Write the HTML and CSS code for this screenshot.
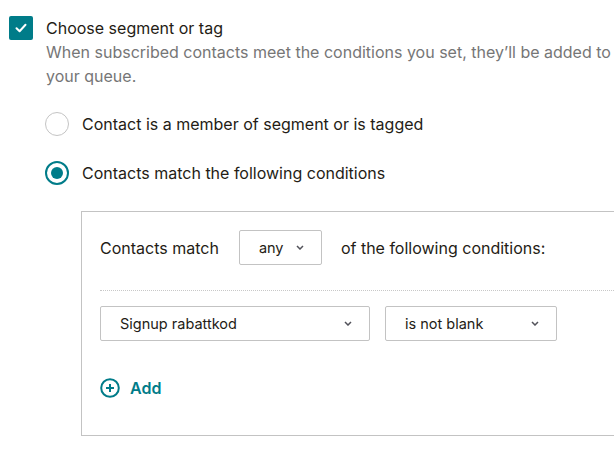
FILE: index.html
```html
<!DOCTYPE html>
<html>
<head>
<meta charset="utf-8">
<link rel="stylesheet" href="styles.css">
</head>
<body>
<div class="page">
  <div class="check-row">
    <span class="checkbox">
      <svg width="14" height="14" viewBox="0 0 14 14"><path d="M2.5 7.2 L5.6 10.2 L11.5 3.8" fill="none" stroke="#fff" stroke-width="2" stroke-linecap="round" stroke-linejoin="round"/></svg>
    </span>
    <div class="check-body">
      <div class="check-title">Choose segment or tag</div>
      <p class="desc">When subscribed contacts meet the conditions you set, they’ll be added to your queue.</p>
    </div>
  </div>
  <div class="radios">
    <div class="radio-row"><span class="radio"></span><span class="radio-label">Contact is a member of segment or is tagged</span></div>
    <div class="radio-row"><span class="radio on"><span class="dot"></span></span><span class="radio-label">Contacts match the following conditions</span></div>
  </div>
  <div class="box">
    <div class="match-row">
      <span class="match-text">Contacts match</span>
      <span class="select sel-any"><span>any</span>
        <svg class="chev" width="8" height="5" viewBox="0 0 8 5"><path d="M1 1 L4 4 L7 1" fill="none" stroke="#52525a" stroke-width="1.5"/></svg>
      </span>
      <span class="match-text">of the following conditions:</span>
    </div>
    <div class="divider"></div>
    <div class="cond-row">
      <span class="select sel-field"><span>Signup rabattkod</span>
        <svg class="chev" width="8" height="5" viewBox="0 0 8 5"><path d="M1 1 L4 4 L7 1" fill="none" stroke="#52525a" stroke-width="1.5"/></svg>
      </span>
      <span class="select sel-op"><span>is not blank</span>
        <svg class="chev" width="8" height="5" viewBox="0 0 8 5"><path d="M1 1 L4 4 L7 1" fill="none" stroke="#52525a" stroke-width="1.5"/></svg>
      </span>
    </div>
    <div class="add-row">
      <svg width="20" height="20" viewBox="0 0 20 20"><circle cx="10" cy="10" r="8.8" fill="none" stroke="#007c89" stroke-width="2"/><path d="M10 6 V14 M6 10 H14" stroke="#007c89" stroke-width="2"/></svg>
      <span class="add-text">Add</span>
    </div>
  </div>
</div>
</body>
</html>
```

FILE: styles.css
```css
html, body {
  margin: 0;
  padding: 0;
  background: #fff;
  overflow: hidden;
}
body {
  font-family: "Inter", "Liberation Sans", sans-serif;
  color: #241c15;
  width: 614px;
  height: 451px;
}
.page {
  padding: 16px 0 0 9px;
}
.check-row {
  display: flex;
  gap: 13px;
  align-items: flex-start;
}
.checkbox {
  flex: 0 0 24px;
  width: 24px;
  height: 24px;
  border-radius: 2px;
  background: #007c89;
  display: flex;
  align-items: center;
  justify-content: center;
}
.check-title {
  font-size: 16px;
  line-height: 24px;
}
.desc {
  margin: 0;
  font-size: 16px;
  line-height: 24px;
  color: #767676;
  width: 566px;
}
.radios {
  margin: 24px 0 0 36px;
  display: flex;
  flex-direction: column;
  gap: 25px;
}
.radio-row {
  display: flex;
  align-items: center;
  gap: 13px;
  font-size: 16px;
  height: 24px;
}
.radio {
  width: 24px;
  height: 24px;
  box-sizing: border-box;
  border: 1px solid #c4c4c4;
  border-radius: 50%;
  display: flex;
  align-items: center;
  justify-content: center;
}
.radio.on {
  border: 2px solid #007c89;
}
.dot {
  width: 12px;
  height: 12px;
  border-radius: 50%;
  background: #007c89;
}
.box {
  margin: 26px 0 0 72px;
  width: 533px;
  height: 225px;
  box-sizing: border-box;
  border: 1px solid #c3c3c3;
  border-right: none;
  padding: 18px 0 0 18px;
}
.match-row {
  display: flex;
  align-items: center;
  gap: 20px;
  font-size: 16px;
  height: 35px;
}
.match-row .sel-any {
  margin-right: -1px;
}
.select {
  box-sizing: border-box;
  height: 35px;
  border: 1px solid #c3c3c3;
  border-radius: 2px;
  display: flex;
  align-items: center;
  justify-content: space-between;
  font-size: 14.5px;
  padding: 0 17px 0 19px;
}
.sel-any { width: 83px; }
.sel-field { width: 270px; }
.sel-op { width: 172px; }
.divider {
  margin-top: 25px;
  border-top: 1px dotted #c8c8c8;
}
.cond-row {
  margin-top: 15px;
  display: flex;
  gap: 15px;
}
.add-row {
  margin-top: 37px;
  display: flex;
  align-items: center;
  gap: 10px;
  height: 20px;
}
.add-text {
  color: #007c89;
  font-size: 16px;
  font-weight: 600;
}
```
